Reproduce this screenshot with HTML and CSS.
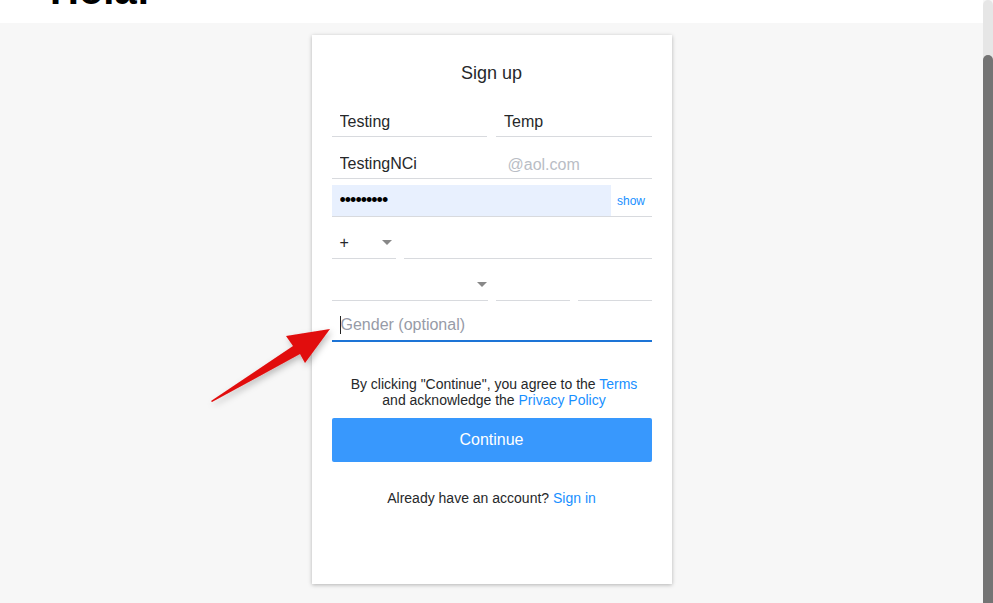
FILE: index.html
```html
<html>
  <head>
    <link rel="stylesheet" href="styles.css">
    <title>Sign up</title>
  </head>
  <body>
    <div class="page">
      <div class="topbar">
        <div class="brand">Hola!</div>
      </div>
      <div class="content">
        <form class="card">
          <h2 class="title">Sign up</h2>

          <div class="row">
            <div class="field"><input value="Testing"></div>
            <div class="field"><input value="Temp"></div>
          </div>

          <div class="row">
            <div class="field email">
              <input class="user" value="TestingNCi">
              <span class="suffix">@aol.com</span>
            </div>
          </div>

          <div class="row tight">
            <div class="field pass">
              <input class="dots" value="&#8226;&#8226;&#8226;&#8226;&#8226;&#8226;&#8226;&#8226;&#8226;">
              <a class="show">show</a>
            </div>
          </div>

          <div class="row">
            <div class="field code">
              <span class="plus">+</span>
              <span class="caret"></span>
            </div>
            <div class="field grow"></div>
          </div>

          <div class="row">
            <div class="field month"><span class="caret"></span></div>
            <div class="field day"></div>
            <div class="field year"></div>
          </div>

          <div class="row gender-row">
            <div class="field focused">
              <span class="cursor"></span><span class="placeholder">Gender (optional)</span>
            </div>
          </div>

          <p class="terms">
            By clicking "Continue", you agree to the <a>Terms</a><br>
            and acknowledge the <a>Privacy Policy</a>
          </p>

          <button type="button" class="continue">Continue</button>

          <p class="signin">Already have an account? <a>Sign in</a></p>
        </form>
      </div>
    </div>
    <div class="scrollbar"><div class="thumb"></div></div>

    <svg class="arrow" width="140" height="90" viewBox="200 320 140 90">
      <defs>
        <filter id="sh" x="-20%" y="-20%" width="150%" height="150%">
          <feDropShadow dx="2" dy="3" stdDeviation="3" flood-color="#000" flood-opacity="0.25"/>
        </filter>
      </defs>
      <polygon filter="url(#sh)" fill="#e10b0b"
        points="211,401 293,346 286,336 330,329 305,363 300,354 212,402"/>
    </svg>
  </body>
</html>
```

FILE: styles.css
```css
body {
  margin: 0;
  display: flex;
  height: 603px;
  overflow: hidden;
  font-family: "Liberation Sans", Arial, sans-serif;
  color: #26282a;
  background: #f7f7f7;
}

.page {
  flex: 1;
  display: flex;
  flex-direction: column;
}

.topbar {
  height: 23px;
  background: #fff;
  overflow: hidden;
}
.brand {
  font-size: 40px;
  font-weight: bold;
  line-height: 1;
  margin-top: -30px;
  padding-left: 50px;
  color: #000;
}

.content {
  flex: 1;
  display: flex;
  justify-content: center;
  padding-top: 12px;
}

.card {
  width: 360px;
  height: 549px;
  box-sizing: border-box;
  margin: 0;
  padding: 28px 20px 0;
  background: #fff;
  box-shadow: 0 1px 4px rgba(0, 0, 0, 0.28);
  display: flex;
  flex-direction: column;
}

.title {
  margin: 0 0 22px;
  font-size: 18px;
  font-weight: normal;
  line-height: 20px;
  text-align: center;
}

.row {
  display: flex;
  gap: 9px;
  margin-bottom: 10px;
}
.row.tight {
  margin-top: -4px;
}
.row.gender-row {
  margin-top: -2px;
}

.field {
  flex: 1;
  height: 32px;
  box-sizing: border-box;
  border-bottom: 1px solid #d8dade;
  display: flex;
  align-items: center;
  position: relative;
}

.field input {
  width: 100%;
  border: 0;
  outline: 0;
  background: transparent;
  padding: 2px 0 0 8px;
  font: 16px "Liberation Sans", Arial, sans-serif;
  color: #26282a;
}

.email .user {
  width: 168px;
}
.suffix {
  color: #b9bdc5;
  font-size: 16px;
  padding: 4px 0 0 8px;
}

.pass input {
  flex: 1;
  height: 31px;
  padding-top: 0;
  background: #e8f0fe;
  font-size: 18px;
  letter-spacing: -1px;
  color: #000;
}
.show {
  width: 41px;
  text-align: center;
  font-size: 12px;
  color: #188fff;
}

.code {
  flex: 0 0 64px;
  justify-content: space-between;
  padding: 0 4px 0 8px;
}
.row .code + .grow {
  margin-left: -1px;
}
.plus {
  font-size: 16px;
}
.caret {
  width: 0;
  height: 0;
  border-left: 5px solid transparent;
  border-right: 5px solid transparent;
  border-top: 5px solid #888;
}

.month {
  flex: 0 0 156px;
  justify-content: flex-end;
  padding-right: 1px;
}
.day,
.year {
  flex: 0 0 74px;
  margin-left: -1px;
}

.focused {
  border-bottom: 2px solid #1d74d6;
  height: 33px;
  padding-left: 8px;
}
.cursor {
  width: 1px;
  height: 18px;
  background: #222;
}
.placeholder {
  color: #979ba7;
  font-size: 16px;
}

.terms {
  margin: 24px 0 10px;
  padding-left: 5px;
  font-size: 14px;
  line-height: 16px;
  text-align: center;
}
a {
  color: #188fff;
  text-decoration: none;
}

.continue {
  height: 44px;
  border: 0;
  border-radius: 2px;
  background: #3898fd;
  color: #fff;
  font: 16px "Liberation Sans", Arial, sans-serif;
}

.signin {
  margin: 28px 0 0;
  font-size: 14px;
  text-align: center;
}

.scrollbar {
  width: 10px;
  background: #e6e6e6;
  border-radius: 5px 5px 0 0;
  display: flex;
  flex-direction: column;
  padding-top: 55px;
}
.thumb {
  flex: 1;
  background: #747474;
  border-radius: 5px 5px 0 0;
}

.arrow {
  position: absolute;
  left: 200px;
  top: 320px;
}
```
